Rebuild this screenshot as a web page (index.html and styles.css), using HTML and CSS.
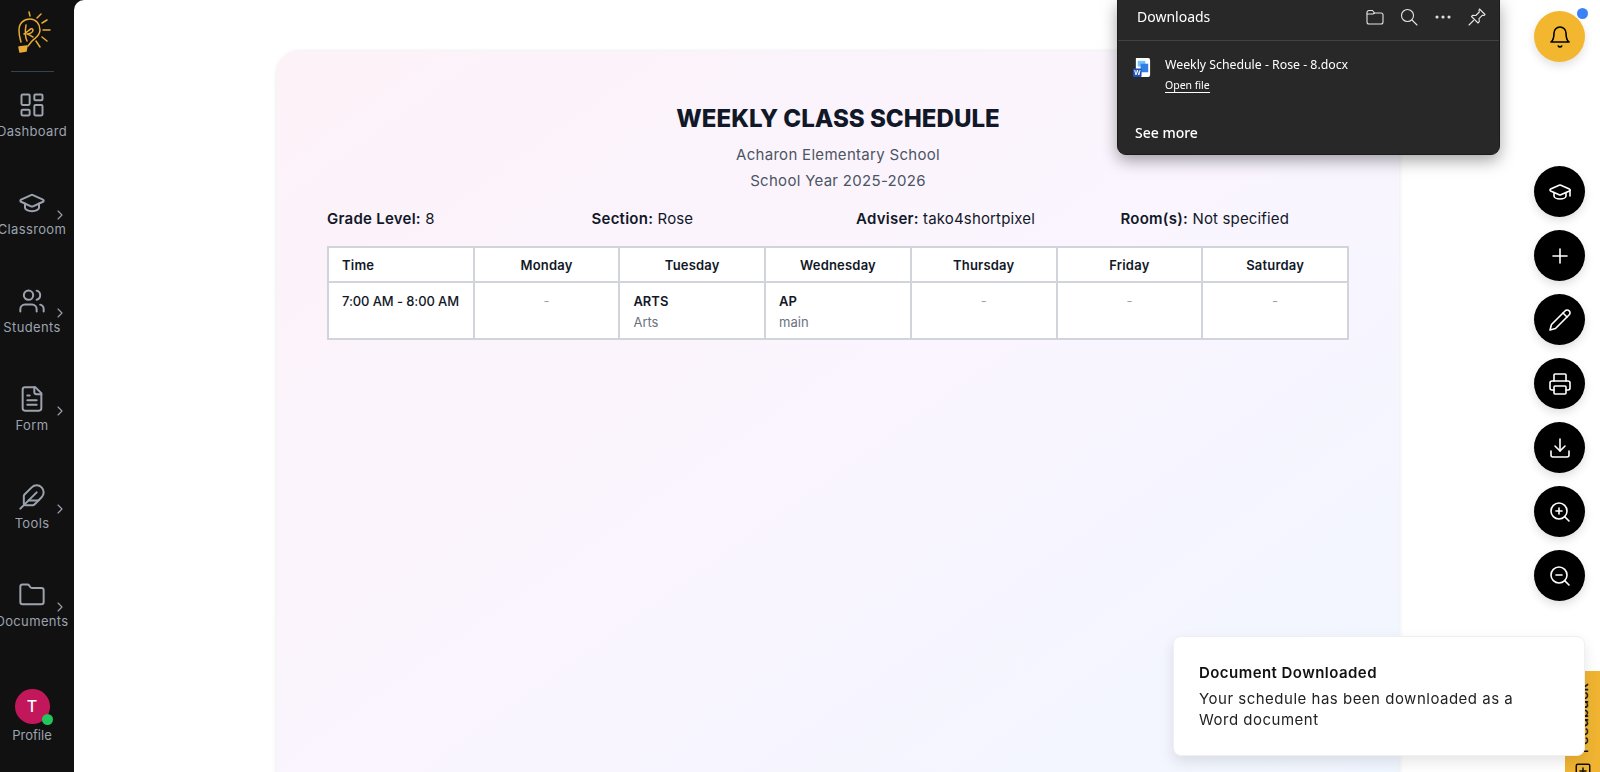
FILE: index.html
```html
<!DOCTYPE html>
<html lang="en">
<head>
    <meta charset="UTF-8">
    <meta name="viewport" content="width=device-width, initial-scale=1.0">
    <title>Weekly Class Schedule</title>
    <link rel="stylesheet" href="styles.css">
</head>
<body>

    <!-- Sidebar -->
    <aside class="sidebar">
        <div class="logo">
            <svg class="logo-icon" viewBox="12 10 40 46">
                <path d="M21 42C20 38 19 36 19 30C19 23 24 19 30 19C36 19 40 24 40 30C40 36 35 38 32 41L28 46"/>
                <path d="M26 25C25 31 25 37 27 41M24 34C28 32 32 26 33 30C33 33 29 34 27 34C29 34 31 36 33 37"/>
                <path d="M19 47L27 46L26 51L20 52Z" fill="currentColor"/>
                <path d="M29 12l1 4M41 14l-4 4M47 20l-5 3M50 30h-7M47 41l-5-4M40 47l-4-6"/>
            </svg>
        </div>
        <div class="sidebar-line"></div>

        <nav class="nav">
            <a class="nav-item">
                <svg class="nav-icon" viewBox="0 0 24 24"><rect x="3" y="3" width="7" height="9" rx="1"/><rect x="14" y="3" width="7" height="5" rx="1"/><rect x="14" y="12" width="7" height="9" rx="1"/><rect x="3" y="16" width="7" height="5" rx="1"/></svg>
                <span>Dashboard</span>
            </a>
            <a class="nav-item">
                <svg class="nav-icon" viewBox="0 0 24 24"><path d="M21.42 10.922a1 1 0 0 0-.019-1.838L12.83 5.18a2 2 0 0 0-1.66 0L2.6 9.08a1 1 0 0 0 0 1.832l8.57 3.908a2 2 0 0 0 1.66 0z"/><path d="M6 12.5V16a6 3 0 0 0 12 0v-3.5"/></svg>
                <span>Classroom</span>
                <svg class="chevron" viewBox="0 0 24 24"><path d="m9 18 6-6-6-6"/></svg>
            </a>
            <a class="nav-item">
                <svg class="nav-icon" viewBox="0 0 24 24"><path d="M16 21v-2a4 4 0 0 0-4-4H6a4 4 0 0 0-4 4v2"/><circle cx="9" cy="7" r="4"/><path d="M22 21v-2a4 4 0 0 0-3-3.87"/><path d="M16 3.13a4 4 0 0 1 0 7.75"/></svg>
                <span>Students</span>
                <svg class="chevron" viewBox="0 0 24 24"><path d="m9 18 6-6-6-6"/></svg>
            </a>
            <a class="nav-item">
                <svg class="nav-icon" viewBox="0 0 24 24"><path d="M15 2H6a2 2 0 0 0-2 2v16a2 2 0 0 0 2 2h12a2 2 0 0 0 2-2V7Z"/><path d="M14 2v4a2 2 0 0 0 2 2h4"/><path d="M10 9H8"/><path d="M16 13H8"/><path d="M16 17H8"/></svg>
                <span>Form</span>
                <svg class="chevron" viewBox="0 0 24 24"><path d="m9 18 6-6-6-6"/></svg>
            </a>
            <a class="nav-item">
                <svg class="nav-icon" viewBox="0 0 24 24"><path d="M12.67 19a2 2 0 0 0 1.416-.588l6.154-6.172a6 6 0 0 0-8.49-8.49L5.586 9.914A2 2 0 0 0 5 11.328V18a1 1 0 0 0 1 1z"/><path d="M16 8 2 22"/><path d="M17.5 15H9"/></svg>
                <span>Tools</span>
                <svg class="chevron" viewBox="0 0 24 24"><path d="m9 18 6-6-6-6"/></svg>
            </a>
            <a class="nav-item">
                <svg class="nav-icon" viewBox="0 0 24 24"><path d="M20 20a2 2 0 0 0 2-2V8a2 2 0 0 0-2-2h-7.9a2 2 0 0 1-1.69-.9L9.6 3.9A2 2 0 0 0 7.93 3H4a2 2 0 0 0-2 2v13a2 2 0 0 0 2 2Z"/></svg>
                <span>Documents</span>
                <svg class="chevron" viewBox="0 0 24 24"><path d="m9 18 6-6-6-6"/></svg>
            </a>
        </nav>

        <a class="profile">
            <div class="avatar">T<i class="online"></i></div>
            <span>Profile</span>
        </a>
    </aside>

    <!-- Schedule -->
    <main class="main">
        <section class="card">
            <h1>WEEKLY CLASS SCHEDULE</h1>
            <p class="school">Acharon Elementary School</p>
            <p class="school">School Year 2025-2026</p>

            <div class="info">
                <div><b>Grade Level:</b> 8</div>
                <div><b>Section:</b> Rose</div>
                <div><b>Adviser:</b> tako4shortpixel</div>
                <div><b>Room(s):</b> Not specified</div>
            </div>

            <table class="schedule">
                <tr>
                    <th class="left">Time</th>
                    <th>Monday</th>
                    <th>Tuesday</th>
                    <th>Wednesday</th>
                    <th>Thursday</th>
                    <th>Friday</th>
                    <th>Saturday</th>
                </tr>
                <tr>
                    <td class="time">7:00 AM - 8:00 AM</td>
                    <td class="empty">-</td>
                    <td><div class="subject">ARTS</div><div class="room">Arts</div></td>
                    <td><div class="subject">AP</div><div class="room">main</div></td>
                    <td class="empty">-</td>
                    <td class="empty">-</td>
                    <td class="empty">-</td>
                </tr>
            </table>
        </section>
    </main>

    <!-- Browser downloads popup -->
    <div class="downloads">
        <div class="downloads-head">
            <span>Downloads</span>
            <div class="downloads-tools">
                <svg viewBox="0 0 20 20"><path d="M2 5.5A2 2 0 0 1 4 3.500h3.500l2 2.500H16a2 2 0 0 1 2 2v7a2 2 0 0 1-2 2H4a2 2 0 0 1-2-2z"/><path d="M2 7h6l1.500-1"/></svg>
                <svg viewBox="0 0 20 20"><circle cx="8.500" cy="8.500" r="6"/><path d="m13 13 5 5"/></svg>
                <svg viewBox="0 0 20 20"><circle cx="4" cy="10" r="1" class="dot"/><circle cx="10" cy="10" r="1" class="dot"/><circle cx="16" cy="10" r="1" class="dot"/></svg>
                <svg viewBox="0 0 20 20"><path d="M12.500 2 18 7.500l-1 1-1.500-.3-3.500 3.500.3 3-1.300 1.300-6.500-6.500L5.800 8.200l3 .3 3.500-3.500L12 3.200z"/><path d="M6.500 13.500 2 18"/></svg>
            </div>
        </div>
        <div class="download-file">
            <svg class="word-icon" viewBox="0 0 20 22">
                <path d="M3 1h13a2 2 0 0 1 2 2v16a2 2 0 0 1-2 2H3z" fill="#fff"/>
                <rect x="5" y="4" width="8" height="6" fill="#6fc3f5"/>
                <rect x="8" y="7" width="8" height="9" fill="#2f7fe6"/>
                <rect x="0" y="12" width="9" height="9" rx="1" fill="#1f4fb8"/>
                <text x="4.500" y="19" class="word-w">W</text>
            </svg>
            <div>
                <div class="file-name">Weekly Schedule - Rose - 8.docx</div>
                <a class="open-file">Open file</a>
            </div>
        </div>
        <div class="see-more">See more</div>
    </div>

    <!-- Notification bell -->
    <button class="bell">
        <svg class="fab-icon" viewBox="0 0 24 24"><path d="M6 8a6 6 0 0 1 12 0c0 7 3 9 3 9H3s3-2 3-9"/><path d="M10.300 21a1.940 1.940 0 0 0 3.400 0"/></svg>
        <i class="bell-dot"></i>
    </button>

    <!-- Floating actions -->
    <div class="fabs">
        <button class="fab"><svg class="fab-icon" viewBox="0 0 24 24"><path d="M21.420 10.922a1 1 0 0 0-.019-1.838L12.830 5.180a2 2 0 0 0-1.660 0L2.600 9.080a1 1 0 0 0 0 1.832l8.570 3.908a2 2 0 0 0 1.660 0z"/><path d="M22 10v6"/><path d="M6 12.500V16a6 3 0 0 0 12 0v-3.500"/></svg></button>
        <button class="fab"><svg class="fab-icon" viewBox="0 0 24 24"><path d="M5 12h14"/><path d="M12 5v14"/></svg></button>
        <button class="fab"><svg class="fab-icon" viewBox="0 0 24 24"><path d="M17 3a2.850 2.830 0 1 1 4 4L7.500 20.500 2 22l1.500-5.500Z"/><path d="m15 5 4 4"/></svg></button>
        <button class="fab"><svg class="fab-icon" viewBox="0 0 24 24"><path d="M6 18H4a2 2 0 0 1-2-2v-5a2 2 0 0 1 2-2h16a2 2 0 0 1 2 2v5a2 2 0 0 1-2 2h-2"/><path d="M6 9V3a1 1 0 0 1 1-1h10a1 1 0 0 1 1 1v6"/><rect x="6" y="14" width="12" height="8" rx="1"/></svg></button>
        <button class="fab"><svg class="fab-icon" viewBox="0 0 24 24"><path d="M21 15v4a2 2 0 0 1-2 2H5a2 2 0 0 1-2-2v-4"/><path d="m7 10 5 5 5-5"/><path d="M12 15V3"/></svg></button>
        <button class="fab"><svg class="fab-icon" viewBox="0 0 24 24"><circle cx="11" cy="11" r="8"/><path d="m21 21-4.350-4.350"/><path d="M11 8v6"/><path d="M8 11h6"/></svg></button>
        <button class="fab"><svg class="fab-icon" viewBox="0 0 24 24"><circle cx="11" cy="11" r="8"/><path d="m21 21-4.350-4.350"/><path d="M8 11h6"/></svg></button>
    </div>

    <!-- Feedback tab -->
    <div class="feedback">
        <span>Feedback</span>
        <svg class="feedback-icon" viewBox="0 0 24 24"><rect x="3" y="3" width="18" height="18" rx="2"/><path d="M12 8v8"/><path d="M8 12h8"/></svg>
    </div>

    <!-- Toast -->
    <div class="toast">
        <div class="toast-title">Document Downloaded</div>
        <div class="toast-text">Your schedule has been downloaded as a Word document</div>
    </div>

</body>
</html>
```

FILE: styles.css
```css
/* General Styling */
* {
    box-sizing: border-box;
}

html, body {
    height: 100%;
}

body {
    margin: 0;
    display: flex;
    overflow: hidden;
    background-color: #111111;
    font-family: Inter, "Open Sans", sans-serif;
    color: #111827;
}

svg {
    display: block;
    fill: none;
    stroke: currentColor;
    stroke-width: 2;
    stroke-linecap: round;
    stroke-linejoin: round;
}

/* Sidebar */
.sidebar {
    width: 74px;
    flex-shrink: 0;
    padding-right: 10px;
    display: flex;
    flex-direction: column;
    align-items: center;
    color: #9ca3af;
}

.logo {
    height: 71px;
    padding-top: 10px;
    color: #e8ab34;
}

.logo-icon {
    width: 40px;
    height: 46px;
    stroke-width: 1.5;
}

.sidebar-line {
    width: 43px;
    height: 1px;
    background-color: #374151;
}

.nav {
    width: 100%;
    padding-top: 19px;
    display: flex;
    flex-direction: column;
}

.nav-item {
    position: relative;
    height: 98px;
    display: flex;
    flex-direction: column;
    align-items: center;
    white-space: nowrap;
    font-size: 13px;
    letter-spacing: 0.35px;
}

.nav-item span {
    margin-top: 2px;
    line-height: 20px;
}

.nav-icon {
    width: 28px;
    height: 28px;
    flex-shrink: 0;
    stroke-width: 1.7;
}

.chevron {
    position: absolute;
    left: 52px;
    top: 18px;
    width: 16px;
    height: 16px;
    stroke-width: 1.6;
}

.profile {
    margin-top: 10px;
    display: flex;
    flex-direction: column;
    align-items: center;
    font-size: 13px;
}

.profile span {
    margin-top: 1px;
    line-height: 20px;
}

.avatar {
    position: relative;
    width: 35px;
    height: 35px;
    border-radius: 50%;
    background-color: #c2185b;
    color: #fff;
    font-size: 16px;
    font-weight: 500;
    line-height: 35px;
    text-align: center;
}

.online {
    position: absolute;
    right: -3px;
    bottom: -1px;
    width: 11px;
    height: 11px;
    border-radius: 50%;
    background-color: #22c55e;
}

/* Main area */
.main {
    flex: 1;
    height: 100%;
    overflow: hidden;
    padding: 50px 200px 0 202px;
    background-color: #fff;
    border-top-left-radius: 10px;
}

.card {
    height: 800px;
    padding: 52px 50px 0;
    border: 1px solid #f3f4f6;
    border-radius: 24px;
    background: linear-gradient(to bottom right, #fdf2f8, #faf5ff, #eff6ff);
    box-shadow: 0 1px 4px rgba(0, 0, 0, 0.08);
    text-align: center;
}

h1 {
    margin: 0 0 7px;
    font-size: 24.1px;
    font-weight: 800;
    line-height: 32px;
    color: #111827;
}

.school {
    margin: 0;
    font-size: 15px;
    line-height: 26px;
    letter-spacing: 0.3px;
    color: #4b5563;
}

.info {
    margin-top: 13px;
    display: grid;
    grid-template-columns: repeat(4, 1fr);
    gap: 36px;
    font-size: 15px;
    line-height: 24px;
    letter-spacing: 0.15px;
    text-align: left;
    white-space: nowrap;
}

.info b {
    font-weight: 600;
    letter-spacing: 0.25px;
}

.schedule {
    width: 100%;
    margin-top: 15px;
    table-layout: fixed;
    border-collapse: collapse;
    background-color: #fff;
    font-size: 13px;
}

.schedule th,
.schedule td {
    border: 2px solid #d1d5db;
}

.schedule th {
    height: 35px;
    padding: 0 13px;
    font-weight: 600;
    letter-spacing: 0.2px;
}

.schedule th.left {
    text-align: left;
}

.schedule td {
    height: 55px;
    padding: 8px 13px 6px;
    vertical-align: top;
    text-align: left;
    line-height: 20px;
}

.time {
    font-weight: 500;
    letter-spacing: -0.1px;
    white-space: nowrap;
}

.schedule td.empty {
    text-align: center;
    color: #9ca3af;
}

.subject {
    font-weight: 600;
}

.room {
    margin-top: 1px;
    color: #6b7280;
}

/* Downloads popup */
.downloads {
    position: fixed;
    left: 1117px;
    top: -1px;
    width: 383px;
    height: 156px;
    background-color: #282828;
    border: 1px solid #1b1b1b;
    border-radius: 0 0 9px 9px;
    box-shadow: 0 6px 16px rgba(0, 0, 0, 0.35);
    font-family: "Noto Sans", "Open Sans", sans-serif;
    color: #fff;
}

.downloads-head {
    height: 41px;
    padding: 0 12px 7px 19px;
    display: flex;
    align-items: center;
    justify-content: space-between;
    border-bottom: 1px solid #424242;
    font-size: 14px;
}

.downloads-tools {
    display: flex;
    gap: 14px;
    color: #e4e4e4;
}

.downloads-tools svg {
    width: 20px;
    height: 20px;
    stroke-width: 1.1;
}

.downloads-tools .dot {
    fill: currentColor;
}

.download-file {
    padding: 16px 0 0 15px;
    display: flex;
    gap: 13px;
}

.word-icon {
    width: 19px;
    height: 21px;
    stroke: none;
}

.word-w {
    fill: #fff;
    font-family: "Liberation Sans", sans-serif;
    font-size: 7px;
    font-weight: 700;
    text-anchor: middle;
}

.file-name {
    font-size: 12.3px;
    line-height: 16px;
}

.open-file {
    display: block;
    width: fit-content;
    margin-top: 6px;
    font-size: 10.5px;
    line-height: 13px;
    border-bottom: 1px solid #fff;
}

.see-more {
    margin: 30px 0 0 17px;
    font-size: 14px;
    font-weight: 500;
    line-height: 20px;
}

/* Bell and floating buttons */
button {
    border: none;
    padding: 0;
    cursor: pointer;
}

.bell,
.fab {
    width: 51px;
    height: 51px;
    border-radius: 50%;
    display: flex;
    align-items: center;
    justify-content: center;
    box-shadow: 0 4px 10px rgba(0, 0, 0, 0.12);
}

.bell {
    position: fixed;
    left: 1534px;
    top: 11px;
    background-color: #f3b72f;
    color: #000;
}

.bell-dot {
    position: absolute;
    right: -3px;
    top: -3px;
    width: 11px;
    height: 11px;
    border-radius: 50%;
    background-color: #3b82f6;
}

.fabs {
    position: fixed;
    left: 1534px;
    top: 166px;
    display: flex;
    flex-direction: column;
    gap: 13px;
}

.fab {
    background-color: #000;
    color: #fff;
}

.fab-icon {
    width: 24px;
    height: 24px;
    stroke-width: 1.6;
}

/* Feedback tab */
.feedback {
    position: fixed;
    left: 1565px;
    top: 671px;
    width: 35px;
    height: 130px;
    padding-top: 12px;
    display: flex;
    flex-direction: column;
    align-items: center;
    background-color: #f0b432;
    color: #111;
}

.feedback span {
    writing-mode: vertical-rl;
    transform: rotate(180deg);
    font-size: 15px;
    font-weight: 500;
    line-height: 18px;
}

.feedback-icon {
    margin-top: 9px;
    width: 18px;
    height: 18px;
    flex-shrink: 0;
}

/* Toast */
.toast {
    position: fixed;
    left: 1173px;
    top: 636px;
    width: 412px;
    height: 120px;
    padding: 26px 60px 0 25px;
    background-color: #fff;
    border: 1px solid #eef0f3;
    border-radius: 8px;
    box-shadow: 0 6px 14px rgba(0, 0, 0, 0.1);
}

.toast-title {
    font-size: 15px;
    font-weight: 600;
    line-height: 20px;
    letter-spacing: 0.45px;
    color: #111;
}

.toast-text {
    margin-top: 5px;
    font-size: 15px;
    line-height: 21px;
    letter-spacing: 0.5px;
    color: #222;
}
```
